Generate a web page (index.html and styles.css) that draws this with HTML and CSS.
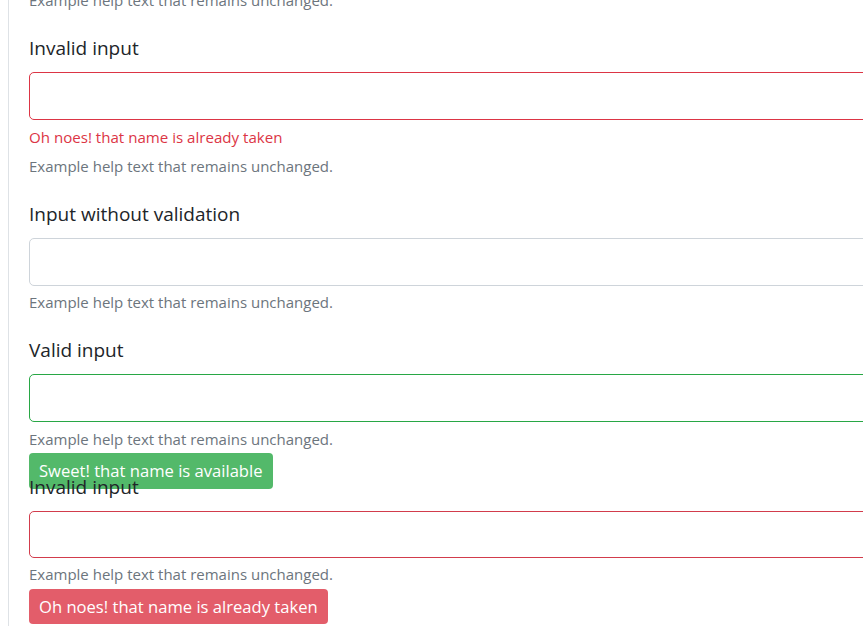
FILE: index.html
```html
<!DOCTYPE html>
<html>
<head>
<meta charset="utf-8">
<link rel="stylesheet" href="styles.css">
</head>
<body>
<div class="page">
  <div class="group">
    <small class="help">Example help text that remains unchanged.</small>
  </div>
  <div class="group">
    <label class="label">Invalid input</label>
    <div class="input invalid"></div>
    <div class="feedback">Oh noes! that name is already taken</div>
    <small class="help">Example help text that remains unchanged.</small>
  </div>
  <div class="group">
    <label class="label">Input without validation</label>
    <div class="input"></div>
    <small class="help">Example help text that remains unchanged.</small>
  </div>
  <div class="group">
    <label class="label">Valid input</label>
    <div class="input valid"></div>
    <small class="help help-valid">Example help text that remains unchanged.</small>
    <div class="tooltip tip-valid">Sweet! that name is available</div>
  </div>
  <div class="group">
    <label class="label">Invalid input</label>
    <div class="input invalid2"></div>
    <small class="help">Example help text that remains unchanged.</small>
    <div class="tooltip tip-invalid">Oh noes! that name is already taken</div>
  </div>
</div>
</body>
</html>
```
FILE: styles.css
```css
html, body {
  margin: 0;
  padding: 0;
  overflow: hidden;
  background: #fff;
}
body {
  font-family: "Open Sans", "Noto Sans", sans-serif;
  color: #212529;
}
.page {
  margin-left: 8px;
  margin-top: -16px;
  border-left: 1px solid #dee2e6;
  padding-left: 20px;
  min-height: 700px;
  width: 1000px;
}
.group {
  position: relative;
  display: flex;
  flex-direction: column;
  padding-bottom: 13px;
}
.label {
  display: block;
  height: 48px;
  line-height: 48px;
  font-size: 19px;
}
.input {
  box-sizing: border-box;
  height: 48px;
  width: 1000px;
  border: 1px solid #ced4da;
  border-radius: 5px;
  background: #fff;
}
.input.invalid { border-color: #dc3545; }
.input.invalid2 { border-color: #d23c4c; height: 47px; }
.input.valid { border-color: #28a745; }
.feedback {
  margin-top: 7px;
  font-size: 15.1px;
  line-height: 21px;
  color: #dc3545;
}
.help {
  display: block;
  margin-top: 6px;
  font-size: 15px;
  line-height: 21px;
  color: #6c757d;
}
.feedback + .help { margin-top: 8px; }
.help.help-valid { margin-top: 7px; }
.tooltip {
  position: absolute;
  left: 0;
  top: 100%;
  margin-top: -9px;
  height: 36px;
  line-height: 36px;
  padding: 0 10px;
  font-size: 16.6px;
  color: #fff;
  border-radius: 4px;
  white-space: nowrap;
}
.tip-valid { background: rgba(40, 167, 69, 0.8); margin-top: -10px; }
.tip-invalid { background: rgba(220, 53, 69, 0.8); height: 35px; line-height: 35px; }
```
